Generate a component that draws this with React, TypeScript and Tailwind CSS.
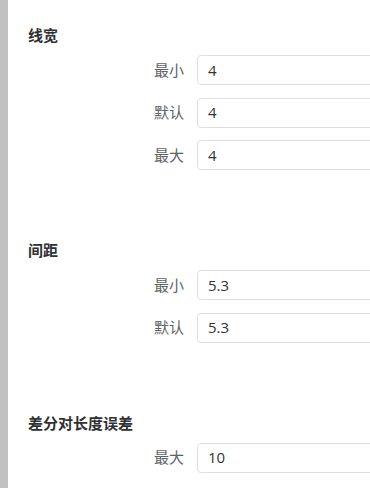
import React from "react";

const font = { fontFamily: '"Segoe UI", "Open Sans", "Noto Sans CJK SC", "Noto Sans", sans-serif' };

function Row({ label, value }: { label: string; value: string }) {
  return (
    <div className="flex items-center h-[30px]">
      <div className="w-[169px] shrink-0 text-right pr-[13px] text-[15px] text-[#606266]">{label}</div>
      <div className="w-[220px] shrink-0 h-[30px] border border-[#dcdfe6] rounded-[4px] flex items-center pl-[10px] text-[15px] text-[#333333]">
        {value}
      </div>
    </div>
  );
}

function Section({ title, rows }: { title: string; rows: [string, string][] }) {
  return (
    <div className="flex flex-col">
      <div className="h-[20px] leading-[20px] text-[15px] font-bold text-[#303133]">{title}</div>
      <div className="flex flex-col gap-[12.5px] mt-[10px]">
        {rows.map(([l, v]) => (
          <Row key={l} label={l} value={v} />
        ))}
      </div>
    </div>
  );
}

export default function App() {
  return (
    <div className="flex w-[370px] h-[488px] overflow-hidden bg-white" style={font}>
      <div className="w-[8px] shrink-0 bg-[#c1c1c1]" />
      <div className="flex-1 flex flex-col pl-[20px] pt-[25px] gap-[70px] overflow-hidden">
        <Section title="线宽" rows={[["最小", "4"], ["默认", "4"], ["最大", "4"]]} />
        <Section title="间距" rows={[["最小", "5.3"], ["默认", "5.3"]]} />
        <Section title="差分对长度误差" rows={[["最大", "10"]]} />
      </div>
    </div>
  );
}
